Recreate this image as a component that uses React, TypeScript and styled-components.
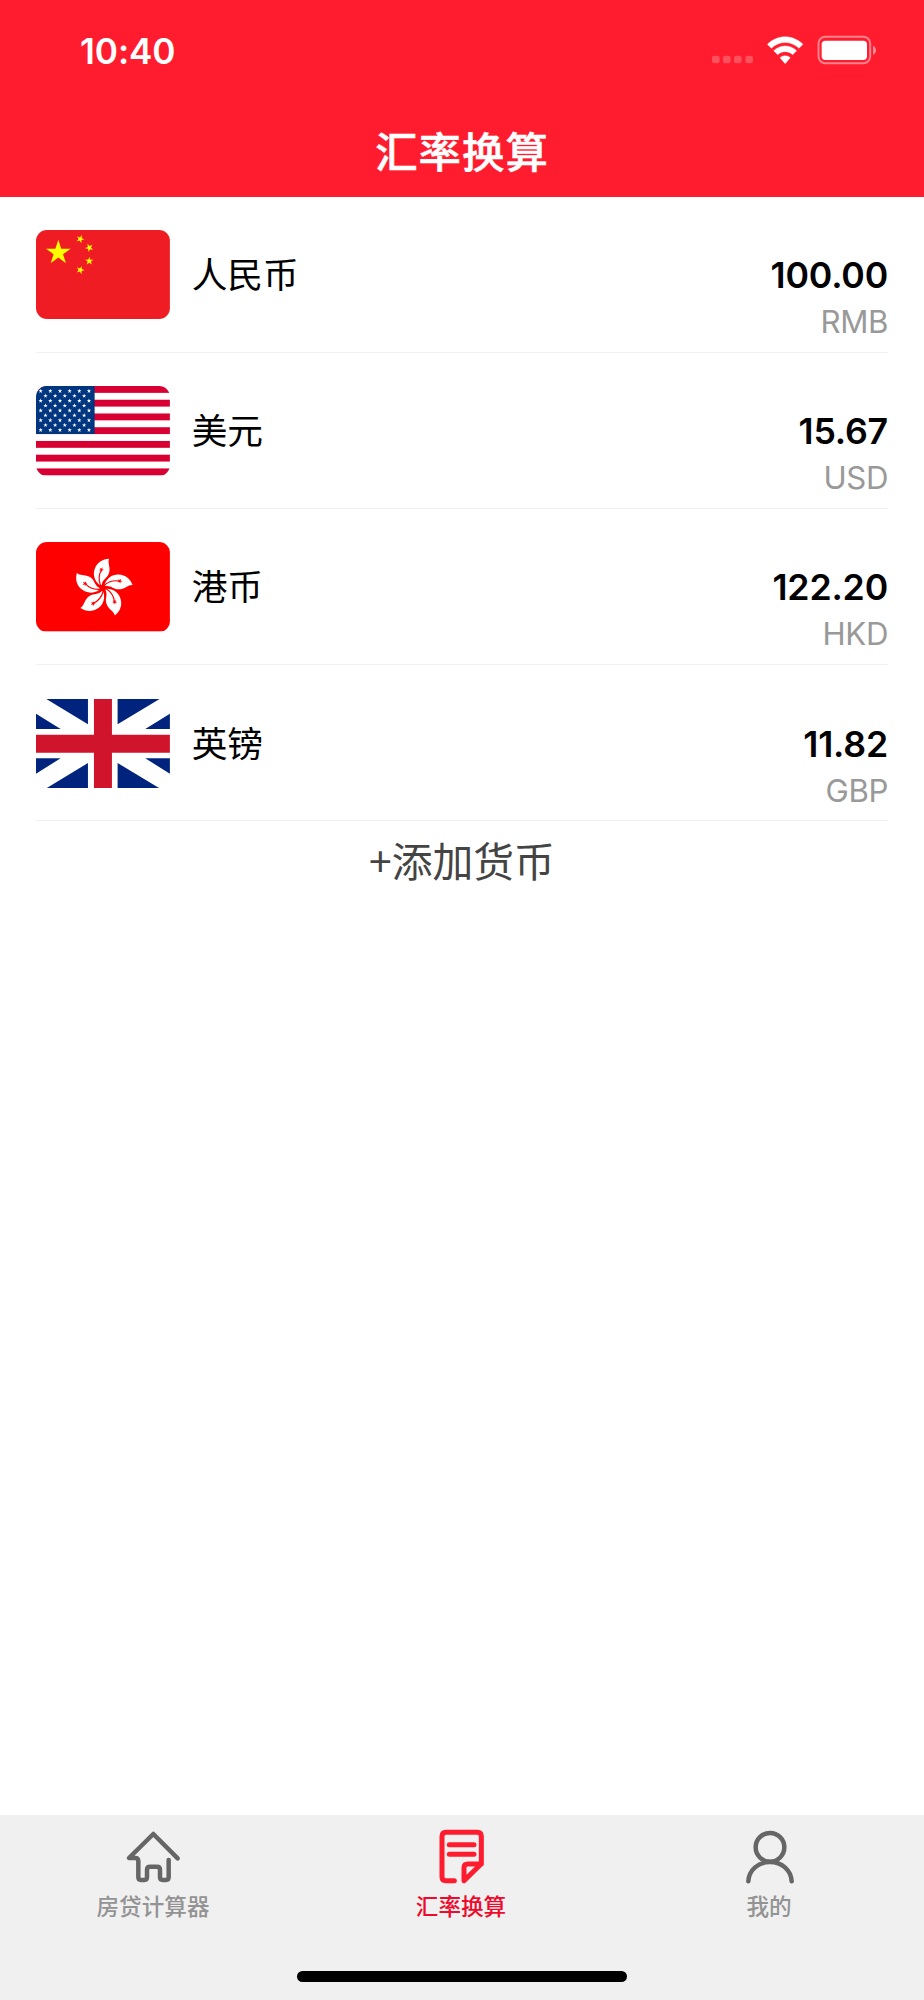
import React from "react";
import styled, { createGlobalStyle } from "styled-components";

const GlobalStyle = createGlobalStyle`
  * { box-sizing: border-box; }
  body { margin: 0; background: #fff; }
`;

const Screen = styled.div`
  display: flex;
  flex-direction: column;
  width: 924px;
  height: 2000px;
  overflow: hidden;
  background: #fff;
  font-family: Inter, "Noto Sans CJK SC", sans-serif;
`;

const Header = styled.header`
  flex: none;
  height: 196.5px;
  background: #ff1c2e;
  color: #fff;
`;

const StatusBar = styled.div`
  display: flex;
  justify-content: space-between;
  height: 98px;
  padding: 33px 46px 0 80px;
`;

const Clock = styled.span`
  font-size: 35.2px;
  font-weight: 600;
  line-height: 36px;
  letter-spacing: -0.1px;
`;

const Title = styled.h1`
  margin: 0;
  font-family: "Noto Sans CJK SC", sans-serif;
  font-size: 42.4px;
  font-weight: 500;
  line-height: 103px;
  letter-spacing: 1px;
  text-align: center;
  -webkit-text-stroke: 0.5px #fff;
`;

const Content = styled.main`
  flex: 1;
  padding: 0 36px;
`;

const Row = styled.div`
  display: flex;
  height: 156.2px;
  padding-top: 33.6px;
  border-bottom: 1.6px solid #f0f0f0;
`;

const FlagSvg = styled.svg<{ $rounded?: boolean }>`
  flex: none;
  display: block;
  width: 133.9px;
  height: 89.3px;
  border-radius: ${(p) => (p.$rounded ? "11px" : "0")};
`;

const Name = styled.span`
  flex: 1;
  padding-left: 21.8px;
  font-family: "Noto Sans CJK SC", sans-serif;
  font-size: 35.7px;
  line-height: 86px;
  color: #000;
`;

const Values = styled.div`
  display: flex;
  flex-direction: column;
  align-items: flex-end;
  padding-top: 22px;
`;

const Amount = styled.span`
  font-size: 35.7px;
  font-weight: 600;
  line-height: 46px;
  letter-spacing: -0.2px;
  color: #000;
`;

const Code = styled.span`
  font-size: 31.2px;
  line-height: 48px;
  letter-spacing: -0.4px;
  color: #999;
`;

const AddButton = styled.button`
  display: block;
  width: 100%;
  height: 76px;
  padding: 0;
  border: 0;
  background: none;
  font-family: "Noto Sans CJK SC", sans-serif;
  font-size: 40.8px;
  line-height: 75px;
  color: #444;
`;

const TabBar = styled.nav`
  flex: none;
  display: flex;
  flex-direction: column;
  align-items: center;
  height: 185px;
  background: #f0f0f0;
`;

const Tabs = styled.div`
  display: flex;
  width: 100%;
  height: 156px;
`;

const Tab = styled.div<{ $active?: boolean }>`
  flex: 1;
  display: flex;
  flex-direction: column;
  align-items: center;
  padding-top: 12px;
  color: ${(p) => (p.$active ? "#ee0a2c" : "#939393")};
`;

const TabIcon = styled.svg<{ $active?: boolean }>`
  display: block;
  width: 60px;
  height: 60px;
  fill: none;
  stroke: ${(p) => (p.$active ? "#ff1c2e" : "#666")};
  stroke-width: ${(p) => (p.$active ? 15 : 13.5)};
  stroke-linecap: round;
  stroke-linejoin: round;
`;

const TabLabel = styled.span`
  margin-top: 3px;
  padding-right: 2px;
  font-family: "Noto Sans CJK SC", sans-serif;
  font-size: 22.6px;
  font-weight: 500;
  line-height: 32px;
`;

const HomeIndicator = styled.div`
  width: 330px;
  height: 11px;
  border-radius: 6px;
  background: #000;
`;

const star = (cx: number, cy: number, r: number, rot = 0) =>
  Array.from({ length: 10 }, (_, i) => {
    const a = ((i * 36 - 90 + rot) * Math.PI) / 180;
    const d = i % 2 ? r * 0.382 : r;
    return `${(cx + d * Math.cos(a)).toFixed(2)},${(cy + d * Math.sin(a)).toFixed(2)}`;
  }).join(" ");

const ChinaFlag = () => (
  <FlagSvg $rounded viewBox="0 0 402 268" preserveAspectRatio="none">
    <rect width="402" height="268" fill="#f01c24" />
    <g fill="#ff0">
      <polygon points={star(67, 68, 39)} />
      <polygon points={star(133, 27, 13, 23)} />
      <polygon points={star(160, 53, 13, 46)} />
      <polygon points={star(160, 93, 13)} />
      <polygon points={star(133, 120, 13, 20)} />
    </g>
  </FlagSvg>
);

const usStars: [number, number][] = [];
for (let r = 0; r < 9; r++) {
  const odd = r % 2;
  for (let c = 0; c < (odd ? 5 : 6); c++) {
    usStars.push([14 + (odd ? 14.5 : 0) + c * 29, 15 + r * 14.65]);
  }
}

const UsFlag = () => (
  <FlagSvg $rounded viewBox="0 0 402 268" preserveAspectRatio="none">
    <rect width="402" height="268" fill="#fff" />
    {[0, 1, 2, 3, 4, 5, 6].map((i) => (
      <rect key={i} y={(i * 2 * 268) / 13} width="402" height={268 / 13} fill="#d80032" />
    ))}
    <rect width="176" height="144" fill="#003580" />
    {usStars.map(([x, y], i) => (
      <polygon key={i} points={star(x, y, 7)} fill="#fff" />
    ))}
  </FlagSvg>
);

const HkFlag = () => (
  <FlagSvg $rounded viewBox="0 0 402 268" preserveAspectRatio="none">
    <rect width="402" height="268" fill="#f00" />
    <g transform="translate(200.5 138)">
      {[0, 72, 144, 216, 288].map((a) => (
        <g key={a} transform={`rotate(${a})`}>
          <path
            d="M-9,-9 C-24,-20 -31,-40 -24,-58 C-17,-77 -1,-87 19,-88 C14,-77 22,-66 20,-50 C17,-29 -1,-28 -3,-9 Z"
            fill="#fff"
          />
          <path d="M-7,-8 C-14,-26 -12,-40 -4,-54" fill="none" stroke="#f00" strokeWidth="3.5" />
          <polygon points={star(-4, -55, 8, 25)} fill="#f00" />
        </g>
      ))}
    </g>
  </FlagSvg>
);

const UkFlag = () => (
  <FlagSvg viewBox="0 0 402 268" preserveAspectRatio="none">
    <rect width="402" height="268" fill="#fff" />
    <path
      fill="#00247d"
      d="M31,0H156V76Z M371,0H245V76Z M0,44L74,90H0Z M402,44L328,90H402Z M31,268H156V192Z M371,268H245V192Z M0,224L74,178H0Z M402,224L328,178H402Z"
    />
    <path fill="#cf142b" d="M174,0H228V107H402V161H228V268H174V161H0V107H174Z" />
  </FlagSvg>
);

const StatusIcons = () => (
  <svg width="168" height="33" viewBox="60 39 504 99" fill="none">
    {[66, 99, 132, 166].map((x) => (
      <rect key={x} x={x} y="107" width="23" height="23" rx="7" fill="#fff" fillOpacity=".23" />
    ))}
    <path
      fill="#fff"
      d="M232,73 C262,43 309,43 339,73 L327,85 C303,62 268,62 244,85 Z M251,92 C270,73 301,73 320,92 L308,104 C296,92 275,92 263,104 Z M270,113 C278,105 293,105 301,113 L285.500,131 Z"
      stroke="#fff"
      strokeWidth="1"
      strokeLinejoin="round"
    />
    <rect x="385.500" y="50.500" width="155" height="79" rx="20" stroke="#fff" strokeOpacity=".45" strokeWidth="6" />
    <rect x="395" y="62" width="136" height="58" rx="11" fill="#fff" />
    <path d="M549,77 C561,82 561,99 549,104 Z" fill="#fff" fillOpacity=".5" />
  </svg>
);

const currencies = [
  { name: "人民币", amount: "100.00", code: "RMB", Flag: ChinaFlag },
  { name: "美元", amount: "15.67", code: "USD", Flag: UsFlag },
  { name: "港币", amount: "122.20", code: "HKD", Flag: HkFlag },
  { name: "英镑", amount: "11.82", code: "GBP", Flag: UkFlag },
];

export default function App() {
  return (
    <Screen>
      <GlobalStyle />
      <Header>
        <StatusBar>
          <Clock>10:40</Clock>
          <StatusIcons />
        </StatusBar>
        <Title>汇率换算</Title>
      </Header>
      <Content>
        {currencies.map(({ name, amount, code, Flag }) => (
          <Row key={code}>
            <Flag />
            <Name>{name}</Name>
            <Values>
              <Amount>{amount}</Amount>
              <Code>{code}</Code>
            </Values>
          </Row>
        ))}
        <AddButton>+添加货币</AddButton>
      </Content>
      <TabBar>
        <Tabs>
          <Tab>
            <TabIcon viewBox="132 81 180 180">
              <path d="M293,175 L220,102 L147,174 H166 Q175,174 175,184 V232 Q175,240 183,240 H193 Q201,240 201,232 V209 Q201,200 210,200 H231 Q240,200 240,209 V232 Q240,240 248,240 H258 Q266,240 266,232 V180" />
            </TabIcon>
            <TabLabel>房贷计算器</TabLabel>
          </Tab>
          <Tab $active>
            <TabIcon $active viewBox="156 81 180 180">
              <path d="M223,242 H198 Q186,242 186,230 V109 Q186,97 198,97 H292 Q304,97 304,109 V191 L252,242 V203 Q252,192 263,192 H304 M208,134 H282 M208,163 H282" />
            </TabIcon>
            <TabLabel>汇率换算</TabLabel>
          </Tab>
          <Tab>
            <TabIcon viewBox="150 81 180 180">
              <circle cx="240" cy="142" r="43" />
              <path d="M175,244 C177,210 205,186 240,186 C275,186 303,210 305,244" />
            </TabIcon>
            <TabLabel>我的</TabLabel>
          </Tab>
        </Tabs>
        <HomeIndicator />
      </TabBar>
    </Screen>
  );
}
